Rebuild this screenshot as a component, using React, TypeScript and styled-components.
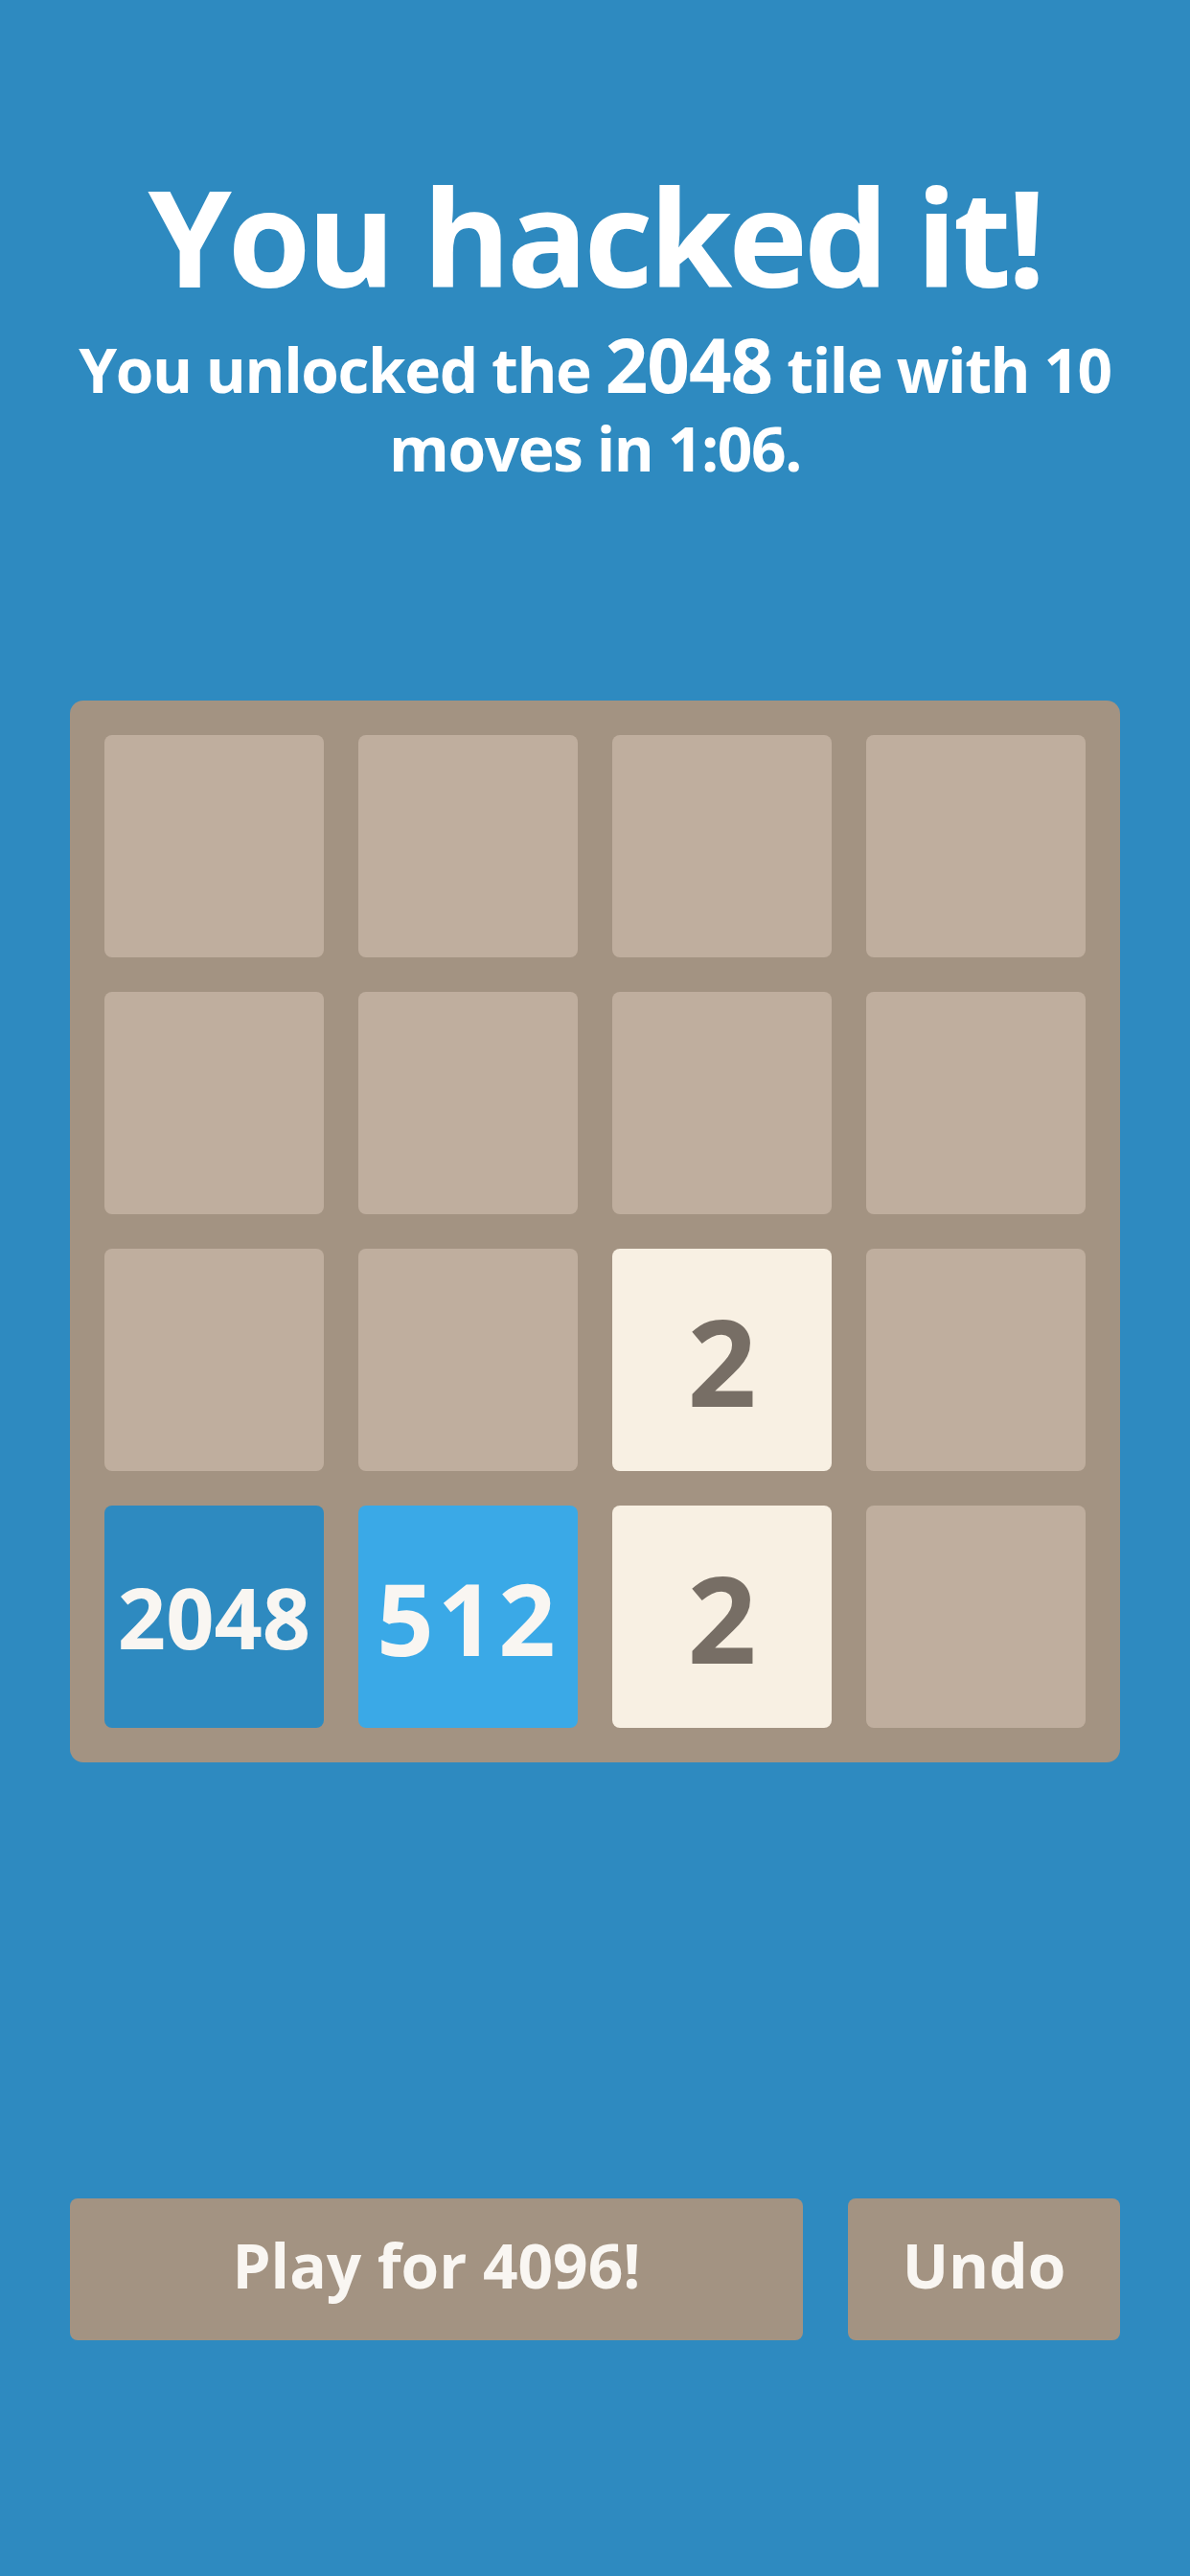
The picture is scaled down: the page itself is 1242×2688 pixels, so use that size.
import styled, { createGlobalStyle } from "styled-components";

const GlobalStyle = createGlobalStyle`
  html, body {
    margin: 0;
    padding: 0;
    background: #2e8ac0;
  }
  body {
    font-family: "Open Sans", "Noto Sans", "Liberation Sans", sans-serif;
  }
`;

const Page = styled.div`
  width: 1242px;
  min-height: 2688px;
  box-sizing: border-box;
  padding: 150px 73px 0;
  display: flex;
  flex-direction: column;
  align-items: stretch;
  background: #2e8ac0;
  color: #ffffff;
`;

const Title = styled.h1`
  margin: 0;
  font-size: 140px;
  line-height: 191px;
  font-weight: 700;
  text-align: center;
  letter-spacing: -4px;
`;

const Subtitle = styled.p`
  margin: 4px 0 0;
  font-size: 64px;
  line-height: 82px;
  font-weight: 700;
  text-align: center;
  letter-spacing: -1.4px;
`;

const Big = styled.span`
  display: inline-block;
  font-size: 78px;
  line-height: 60px;
  letter-spacing: -1px;
`;

const Board = styled.div`
  margin-top: 222px;
  display: grid;
  grid-template-columns: repeat(4, 229px);
  grid-auto-rows: 232px;
  gap: 36px;
  padding: 36px;
  background: #a39382;
  border-radius: 14px;
`;

const tileColors: Record<number, { bg: string; fg: string; size: number; spacing: number }> = {
  0: { bg: "#bfae9e", fg: "transparent", size: 100, spacing: 0 },
  2: { bg: "#f8f0e3", fg: "#776e65", size: 126, spacing: 0 },
  512: { bg: "#3aa9e7", fg: "#f9f6f2", size: 104, spacing: 4 },
  2048: { bg: "#2e8ac0", fg: "#f9f6f2", size: 88, spacing: 0 },
};

const Tile = styled.div<{ $value: number }>`
  display: flex;
  align-items: center;
  justify-content: center;
  border-radius: 8px;
  font-weight: 700;
  background: ${(p) => tileColors[p.$value].bg};
  color: ${(p) => tileColors[p.$value].fg};
  font-size: ${(p) => tileColors[p.$value].size}px;
  letter-spacing: ${(p) => tileColors[p.$value].spacing}px;
`;

const Actions = styled.div`
  margin-top: 455px;
  display: flex;
  gap: 47px;
`;

const Button = styled.button<{ $wide?: boolean }>`
  flex: ${(p) => (p.$wide ? "0 0 765px" : "1 1 auto")};
  height: 148px;
  padding: 0 0 10px;
  border: none;
  border-radius: 8px;
  background: #a39382;
  color: #f9f6f2;
  font-family: inherit;
  font-size: 64px;
  font-weight: 700;
  letter-spacing: 0;
  cursor: pointer;
`;

const board = [
  [0, 0, 0, 0],
  [0, 0, 0, 0],
  [0, 0, 2, 0],
  [2048, 512, 2, 0],
];

function App() {
  return (
    <Page>
      <GlobalStyle />
      <Title>You hacked it!</Title>
      <Subtitle>
        You unlocked the <Big>2048</Big> tile with 10 moves in 1:06.
      </Subtitle>
      <Board>
        {board.flat().map((v, i) => (
          <Tile key={i} $value={v}>
            {v > 0 ? v : ""}
          </Tile>
        ))}
      </Board>
      <Actions>
        <Button $wide>Play for 4096!</Button>
        <Button>Undo</Button>
      </Actions>
    </Page>
  );
}

export default App;
